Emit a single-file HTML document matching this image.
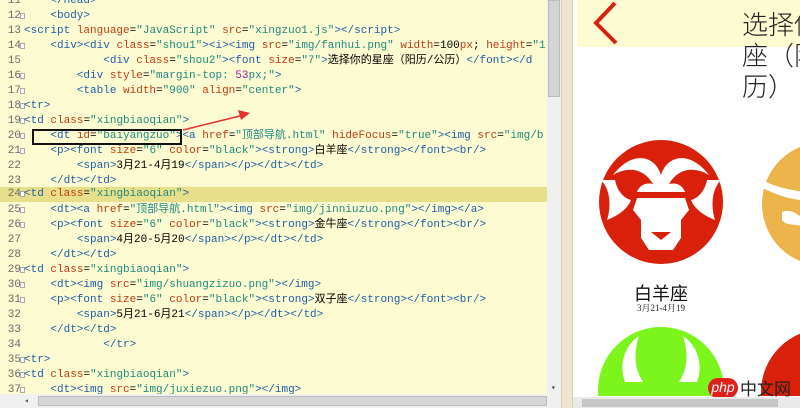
<!DOCTYPE html>
<html><head><meta charset="utf-8"><style>
*{margin:0;padding:0;box-sizing:border-box}
html,body{width:800px;height:408px;overflow:hidden}
body{position:relative;background:#fff;font-family:"Liberation Mono","Noto Sans CJK SC",monospace}
#ed{position:absolute;left:0;top:0;width:547px;height:394px;background:#fdfbd2;overflow:hidden}
.l{position:absolute;left:0;height:15px;line-height:15px;font-size:11px;white-space:pre;width:547px}
.n{position:absolute;left:2px;width:19px;text-align:right;color:#6a6a6a}
.c{position:absolute;left:24px;color:#000}
.f{position:absolute;left:20px;top:4px;width:5px;height:6px;border:1px solid #aaa;background:#fff}
.t{color:#1d5ea8}.a{color:#c33a10}.s{color:#208a80}
.hl{background:#e8df8a}
#pv{position:absolute;left:573px;top:0;width:227px;height:396px;overflow:hidden}
</style></head><body>
<div id="ed">
<div class="l" style="top:-6px"><span class="n">11</span><span class="c">    <span class="t">&lt;/head&gt;</span></span></div>
<div class="l" style="top:9px"><span class="n">12</span><span class="f"></span><span class="c">    <span class="t">&lt;body&gt;</span></span></div>
<div class="l" style="top:24px"><span class="n">13</span><span class="c"><span class="t">&lt;script</span> <span class="a">language</span>=<span class="s">"JavaScript"</span> <span class="a">src</span>=<span class="s">"xingzuo1.js"</span><span class="t">&gt;&lt;/script&gt;</span></span></div>
<div class="l" style="top:39px"><span class="n">14</span><span class="f"></span><span class="c">    <span class="t">&lt;div&gt;&lt;div</span> <span class="a">class</span>=<span class="s">"shou1"</span><span class="t">&gt;&lt;i&gt;&lt;img</span> <span class="a">src</span>=<span class="s">"img/fanhui.png"</span> <span class="a">width</span>=100<span class="a">px</span>; <span class="a">height</span>=<span class="s">"1</span></span></div>
<div class="l" style="top:54px"><span class="n">15</span><span class="c">            <span class="t">&lt;div</span> <span class="a">class</span>=<span class="s">"shou2"</span><span class="t">&gt;&lt;font</span> <span class="a">size</span>=<span class="s">"7"</span><span class="t">&gt;</span>选择你的星座（阳历/公历）<span class="t">&lt;/font&gt;&lt;/d</span></span></div>
<div class="l" style="top:69px"><span class="n">16</span><span class="f"></span><span class="c">        <span class="t">&lt;div</span> <span class="a">style</span>=<span class="s">"margin-top: <span style="color:#a020a0">53</span>px;"</span><span class="t">&gt;</span></span></div>
<div class="l" style="top:84px"><span class="n">17</span><span class="f"></span><span class="c">        <span class="t">&lt;table</span> <span class="a">width</span>=<span class="s">"900"</span> <span class="a">align</span>=<span class="s">"center"</span><span class="t">&gt;</span></span></div>
<div class="l" style="top:99px"><span class="n">18</span><span class="f"></span><span class="c"><span class="t">&lt;tr&gt;</span></span></div>
<div class="l" style="top:114px"><span class="n">19</span><span class="f"></span><span class="c"><span class="t">&lt;td</span> <span class="a">class</span>=<span class="s">"xingbiaoqian"</span><span class="t">&gt;</span></span></div>
<div class="l" style="top:129px"><span class="n">20</span><span class="f"></span><span class="c">    <span class="t">&lt;dt</span> <span class="a">id</span>=<span class="s">"baiyangzuo"</span><span class="t">&gt;&lt;a</span> <span class="a">href</span>=<span class="s">"顶部导航.html"</span> <span class="a">hideFocus</span>=<span class="s">"true"</span><span class="t">&gt;&lt;img</span> <span class="a">src</span>=<span class="s">"img/b</span></span></div>
<div class="l" style="top:144px"><span class="n">21</span><span class="f"></span><span class="c">    <span class="t">&lt;p&gt;&lt;font</span> <span class="a">size</span>=<span class="s">"6"</span> <span class="a">color</span>=<span class="s">"black"</span><span class="t">&gt;&lt;strong&gt;</span>白羊座<span class="t">&lt;/strong&gt;&lt;/font&gt;&lt;br/&gt;</span></span></div>
<div class="l" style="top:159px"><span class="n">22</span><span class="c">        <span class="t">&lt;span&gt;</span>3月21-4月19<span class="t">&lt;/span&gt;&lt;/p&gt;&lt;/dt&gt;&lt;/td&gt;</span></span></div>
<div class="l" style="top:174px"><span class="n">23</span><span class="c">    <span class="t">&lt;/dt&gt;&lt;/td&gt;</span></span></div>
<div class="l hl" style="top:187px"><span class="n">24</span><span class="f"></span><span class="c"><span class="t">&lt;td</span> <span class="a">class</span>=<span class="s">"xingbiaoqian"</span><span class="t">&gt;</span></span></div>
<div class="l" style="top:203px"><span class="n">25</span><span class="f"></span><span class="c">    <span class="t">&lt;dt&gt;&lt;a</span> <span class="a">href</span>=<span class="s">"顶部导航.html"</span><span class="t">&gt;&lt;img</span> <span class="a">src</span>=<span class="s">"img/jinniuzuo.png"</span><span class="t">&gt;&lt;/img&gt;&lt;/a&gt;</span></span></div>
<div class="l" style="top:218px"><span class="n">26</span><span class="f"></span><span class="c">    <span class="t">&lt;p&gt;&lt;font</span> <span class="a">size</span>=<span class="s">"6"</span> <span class="a">color</span>=<span class="s">"black"</span><span class="t">&gt;&lt;strong&gt;</span>金牛座<span class="t">&lt;/strong&gt;&lt;/font&gt;&lt;br/&gt;</span></span></div>
<div class="l" style="top:233px"><span class="n">27</span><span class="c">        <span class="t">&lt;span&gt;</span>4月20-5月20<span class="t">&lt;/span&gt;&lt;/p&gt;&lt;/dt&gt;&lt;/td&gt;</span></span></div>
<div class="l" style="top:248px"><span class="n">28</span><span class="c">    <span class="t">&lt;/dt&gt;&lt;/td&gt;</span></span></div>
<div class="l" style="top:263px"><span class="n">29</span><span class="f"></span><span class="c"><span class="t">&lt;td</span> <span class="a">class</span>=<span class="s">"xingbiaoqian"</span><span class="t">&gt;</span></span></div>
<div class="l" style="top:278px"><span class="n">30</span><span class="f"></span><span class="c">    <span class="t">&lt;dt&gt;&lt;img</span> <span class="a">src</span>=<span class="s">"img/shuangzizuo.png"</span><span class="t">&gt;&lt;/img&gt;</span></span></div>
<div class="l" style="top:293px"><span class="n">31</span><span class="f"></span><span class="c">    <span class="t">&lt;p&gt;&lt;font</span> <span class="a">size</span>=<span class="s">"6"</span> <span class="a">color</span>=<span class="s">"black"</span><span class="t">&gt;&lt;strong&gt;</span>双子座<span class="t">&lt;/strong&gt;&lt;/font&gt;&lt;br/&gt;</span></span></div>
<div class="l" style="top:308px"><span class="n">32</span><span class="c">        <span class="t">&lt;span&gt;</span>5月21-6月21<span class="t">&lt;/span&gt;&lt;/p&gt;&lt;/dt&gt;&lt;/td&gt;</span></span></div>
<div class="l" style="top:323px"><span class="n">33</span><span class="c">    <span class="t">&lt;/dt&gt;&lt;/td&gt;</span></span></div>
<div class="l" style="top:338px"><span class="n">34</span><span class="c">            <span class="t">&lt;/tr&gt;</span></span></div>
<div class="l" style="top:353px"><span class="n">35</span><span class="f"></span><span class="c"><span class="t">&lt;tr&gt;</span></span></div>
<div class="l" style="top:368px"><span class="n">36</span><span class="f"></span><span class="c"><span class="t">&lt;td</span> <span class="a">class</span>=<span class="s">"xingbiaoqian"</span><span class="t">&gt;</span></span></div>
<div class="l" style="top:383px"><span class="n">37</span><span class="f"></span><span class="c">    <span class="t">&lt;dt&gt;&lt;img</span> <span class="a">src</span>=<span class="s">"img/juxiezuo.png"</span><span class="t">&gt;&lt;/img&gt;</span></span></div>
<div style="position:absolute;left:32px;top:129px;width:150px;height:16px;border:2px solid #111"></div>
<svg style="position:absolute;left:0;top:0" width="547" height="394"><line x1="183" y1="130" x2="244" y2="115" stroke="#e53030" stroke-width="1.5"/><polygon points="250,113 238,110 241,120" fill="#e53030"/></svg>
</div>
<div style="position:absolute;left:0;top:394px;width:547px;height:14px;background:#f0f0f0"></div>
<div style="position:absolute;left:24px;top:396px;width:10px;height:10px;color:#555;font-size:8px">◂</div>
<div style="position:absolute;left:38px;top:396px;width:509px;height:10px;background:#d6d6d6;border:1px solid #bbb"></div>
<div style="position:absolute;left:547px;top:0;width:14px;height:408px;background:#f0f0f0"></div>
<div style="position:absolute;left:548px;top:0;width:12px;height:97px;background:#d4d4d4;border:1px solid #bbb"></div>
<div style="position:absolute;left:551px;top:383px;color:#444;font-size:8px">▾</div>
<div style="position:absolute;left:561px;top:0;width:12px;height:408px;background:#eee6cc;border-left:1px solid #d8d0b0;border-right:1px solid #d8d0b0"></div>
<div id="pv">
<div style="position:absolute;left:4px;top:0;width:223px;height:47px;background:#fdfbd2"></div>
<svg style="position:absolute;left:15px;top:0" width="40" height="48"><polyline points="27,3 8,23 28,43" fill="none" stroke="#d62210" stroke-width="4"/></svg>
<div style="position:absolute;left:169px;top:8px;width:145px;font-size:26px;line-height:31px;font-family:'Noto Sans CJK SC',sans-serif;font-weight:300;color:#222">选择你的星座（阳历/公历）</div>
<svg style="position:absolute;left:4px;top:120px" width="223" height="276">
<circle cx="84" cy="82" r="62" fill="#d8200a"/>
<path d="M36,55 C55,30 78,35 84,55 C90,35 113,30 132,55 C115,45 100,50 92,64 C100,62 106,66 108,72 L60,72 C62,66 68,62 76,64 C68,50 53,45 36,55Z" fill="#fff"/>
<path d="M24,60 C34,70 34,88 30,100 C40,96 50,90 54,80 C46,78 40,70 38,60Z M144,60 C134,70 134,88 138,100 C128,96 118,90 114,80 C122,78 128,70 130,60Z" fill="#fff"/>
<path d="M60,78 L108,78 L112,90 L104,100 L104,118 L96,130 L72,130 L64,118 L64,100 L56,90Z" fill="#fff"/>
<path d="M74,112 L94,112 L84,120Z" fill="#d8200a"/>
<circle cx="247" cy="84" r="62" fill="#ecb44a"/>
<path d="M185,60 C205,70 220,70 225,72 L224,80 C205,78 195,72 185,68Z" fill="#fff"/>
<path d="M205,92 C215,88 222,96 225,98 L225,106 C215,104 208,105 205,100Z" fill="#fff"/>
<circle cx="84" cy="270" r="63" fill="#7cf51c"/>
<path d="M48,262 C40,240 52,222 62,216 C56,235 58,250 66,262Z M120,262 C128,240 116,222 106,216 C112,235 110,250 102,262Z" fill="#fff"/>
<circle cx="247" cy="272" r="63" fill="#d8200a"/>
</svg>
<div style="position:absolute;left:4px;top:280px;width:168px;text-align:center;font-size:18px;font-family:'Noto Sans CJK SC',sans-serif;color:#111">白羊座</div>
<div style="position:absolute;left:4px;top:301px;width:168px;text-align:center;font-size:9px;font-family:'Liberation Serif','Noto Serif CJK SC',serif;color:#222">3月21-4月19</div>
</div>
<div style="position:absolute;left:708px;top:378px;width:30px;height:20px;background:#e0201a;border-radius:12px;color:#fff;font-family:'Liberation Sans',sans-serif;font-style:italic;font-size:14px;line-height:18px;text-align:center">php</div>
<div style="position:absolute;left:740px;top:377px;font-size:17px;font-family:'Noto Sans CJK SC',sans-serif;color:#222;line-height:22px">中文网</div>
<div style="position:absolute;left:573px;top:397px;width:227px;height:11px;background:#eaeaea"></div>
<div style="position:absolute;left:582px;top:399px;width:196px;height:8px;background:#c6c6c6"></div>
</body></html>
